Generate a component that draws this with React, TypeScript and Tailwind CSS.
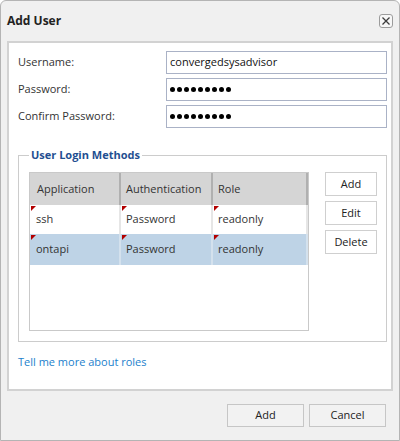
import React from "react";

const font = { fontFamily: '"Open Sans", "Liberation Sans", sans-serif' };

function Dots() {
  return (
    <div className="flex items-center gap-[2px]">
      {Array.from({ length: 9 }).map((_, i) => (
        <span key={i} className="w-[5px] h-[5px] rounded-full bg-black" />
      ))}
    </div>
  );
}

function Flag() {
  return (
    <span className="absolute left-[1px] top-[1px] w-0 h-0 border-t-[5px] border-r-[5px] border-t-[#b30000] border-r-transparent" />
  );
}

const rows = [
  { app: "ssh", auth: "Password", role: "readonly", selected: false, h: "h-[29px]" },
  { app: "ontapi", auth: "Password", role: "readonly", selected: true, h: "h-[31px]" },
];

export default function App() {
  return (
    <div
      className="w-[400px] h-[441px] bg-[#f0f0f0] border border-[#b4b4b4] rounded-t-[6px] flex flex-col text-[11px] text-[#333]"
      style={font}
    >
      {/* title bar */}
      <div className="h-[40px] flex items-center justify-between pl-[6px] pr-[6px]">
        <span className="font-bold text-[12px] text-[#222]">Add User</span>
        <button className="w-[14px] h-[14px] border border-[#9c9c9c] rounded-[3px] bg-[#f7f7f7] flex items-center justify-center">
          <svg width="8" height="8" viewBox="0 0 8 8">
            <path d="M0.5 0.5L7.5 7.5M7.5 0.5L0.5 7.5" stroke="#3c3c3c" strokeWidth="1.3" />
          </svg>
        </button>
      </div>

      {/* content panel */}
      <div className="mx-[6px] h-[350px] border-2 border-[#d2d2d2] bg-white pl-[9px] pr-[4px] pt-[8px] flex flex-col">
        <div className="flex flex-col gap-[4px]">
          <div className="flex items-center h-[23px]">
            <span className="w-[148px]">Username:</span>
            <div className="flex-1 h-[23px] border border-[#aab2c6] px-[3px] flex items-center text-[#111]">
              convergedsysadvisor
            </div>
          </div>
          <div className="flex items-center h-[23px]">
            <span className="w-[148px]">Password:</span>
            <div className="flex-1 h-[23px] border border-[#aab2c6] px-[3px] flex items-center">
              <Dots />
            </div>
          </div>
          <div className="flex items-center h-[23px]">
            <span className="w-[148px]">Confirm Password:</span>
            <div className="flex-1 h-[23px] border border-[#aab2c6] px-[3px] flex items-center">
              <Dots />
            </div>
          </div>
        </div>

        <fieldset className="mt-[19px] border border-[#cccccc] px-[10px] pb-[10px] pt-[9px]">
          <legend className="px-[2px] font-bold text-[#1f4f91] leading-[16px]">User Login Methods</legend>
          <div className="flex items-start">
            <div className="w-[280px] h-[159px] border border-[#c9c9c9] flex flex-col">
              <div className="h-[32px] bg-[#d5d5d5] flex items-center">
                <div className="w-[91px] h-full pl-[7px] flex items-center border-r-2 border-[#b0b0b0]">Application</div>
                <div className="w-[92px] h-full pl-[5px] flex items-center border-r-2 border-[#b0b0b0]">Authentication</div>
                <div className="flex-1 h-full pl-[5px] flex items-center border-r-2 border-[#b0b0b0]">Role</div>
              </div>
              {rows.map((r) => {
                const line = r.selected ? "border-[#d4e1ed]" : "border-[#e6e6e6]";
                return (
                  <div key={r.app} className={`${r.h} flex ${r.selected ? "bg-[#bed3e6]" : "bg-white"}`}>
                    <div className={`relative w-[91px] h-full pl-[6px] flex items-center border-r-2 ${line}`}>
                      <Flag />
                      {r.app}
                    </div>
                    <div className={`relative w-[92px] h-full pl-[5px] flex items-center border-r-2 ${line}`}>
                      <Flag />
                      {r.auth}
                    </div>
                    <div className={`relative flex-1 h-full pl-[5px] flex items-center border-r-2 ${line}`}>
                      <Flag />
                      {r.role}
                    </div>
                  </div>
                );
              })}
            </div>
            <div className="ml-auto mr-[-1px] w-[52px] flex flex-col gap-[5px]">
              {["Add", "Edit", "Delete"].map((b) => (
                <button key={b} className="h-[24px] border border-[#cfcfcf] bg-white text-[#222] text-center">
                  {b}
                </button>
              ))}
            </div>
          </div>
        </fieldset>

        <a className="mt-[12px] leading-[16px] text-[#1b7fcc] w-max">Tell me more about roles</a>
      </div>

      {/* footer */}
      <div className="flex justify-end gap-[5px] pt-[13px] pr-[13px]">
        <button className="w-[77px] h-[23px] border border-[#c6c6c6] bg-[#f2f2f2] text-[#222]">Add</button>
        <button className="w-[77px] h-[23px] border border-[#c6c6c6] bg-[#f2f2f2] text-[#222]">Cancel</button>
      </div>
    </div>
  );
}
